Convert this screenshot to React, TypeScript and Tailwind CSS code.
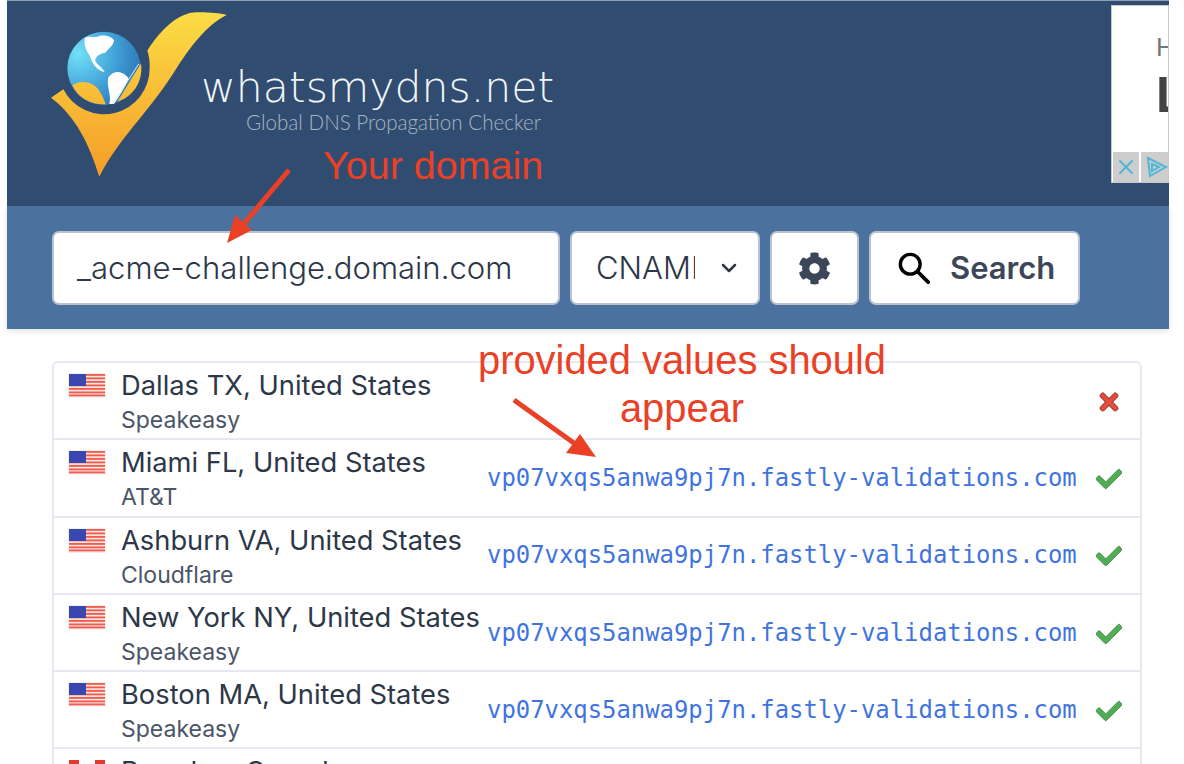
import { ChevronDown, X } from "lucide-react";
import { FaCheck, FaCog, FaTimes } from "react-icons/fa";

const UI_FONT = "font-['Inter','Noto_Sans',sans-serif]";

interface Row {
  city: string;
  isp: string;
  value: string;
  ok: boolean;
  flag: "us" | "ca";
}

const VALUE = "vp07vxqs5anwa9pj7n.fastly-validations.com";

const rows: Row[] = [
  { city: "Dallas TX, United States", isp: "Speakeasy", value: "", ok: false, flag: "us" },
  { city: "Miami FL, United States", isp: "AT&T", value: VALUE, ok: true, flag: "us" },
  { city: "Ashburn VA, United States", isp: "Cloudflare", value: VALUE, ok: true, flag: "us" },
  { city: "New York NY, United States", isp: "Speakeasy", value: VALUE, ok: true, flag: "us" },
  { city: "Boston MA, United States", isp: "Speakeasy", value: VALUE, ok: true, flag: "us" },
  { city: "Brandon, Canada", isp: "Speakeasy", value: VALUE, ok: true, flag: "ca" },
];

const UsFlag = () => (
  <svg width="38" height="25" viewBox="0 0 38 25" className="shrink-0">
    <rect width="38" height="25" fill="#f1f1f4" />
    <rect x="1" y="1" width="36" height="23" fill="#fbe3e0" />
    {[1, 4.5, 8, 11.5, 15, 18.5, 21.5].map((y) => (
      <rect key={y} x="1" y={y} width="36" height="1.8" fill="#ef5a4c" />
    ))}
    <rect x="1" y="1" width="17" height="12" fill="#3a47b0" />
  </svg>
);

const CaFlag = () => (
  <svg width="38" height="25" viewBox="0 0 38 25" className="shrink-0">
    <rect width="38" height="25" fill="#ffffff" />
    <rect x="1" y="1" width="10" height="23" fill="#e8382b" />
    <rect x="27" y="1" width="10" height="23" fill="#e8382b" />
  </svg>
);

const Logo = () => (
  <svg width="200" height="185" viewBox="0 3 600 555" className="shrink-0">
    <defs>
      <linearGradient id="gold" gradientUnits="userSpaceOnUse" x1="0" y1="40" x2="0" y2="530">
        <stop offset="0" stopColor="#fbdc45" />
        <stop offset="1" stopColor="#f59c28" />
      </linearGradient>
      <radialGradient id="sea" cx="0.15" cy="0.3" r="0.95">
        <stop offset="0" stopColor="#72e0f8" />
        <stop offset="0.6" stopColor="#3d9bd3" />
        <stop offset="1" stopColor="#2b6fae" />
      </radialGradient>
    </defs>
    <path
      d="M33 293 L70 268 A137 137 0 0 0 329 205 C330 185 327 168 322 152 C360 90 420 30 480 37 C510 37 540 40 560 45 C500 75 450 140 400 220 C320 345 240 410 178 530 C150 440 110 350 33 293 Z"
      fill="url(#gold)"
    />
    <circle cx="192" cy="205" r="110" fill="url(#sea)" />
    {/* north america */}
    <path
      d="M135 113 C150 106 165 116 178 108 C195 104 212 108 222 120 C222 136 205 146 196 158 C180 160 164 170 166 182 C172 196 184 198 194 216 C174 214 156 192 150 168 C138 152 130 132 135 113 Z"
      fill="#ffffff"
    />
    {/* south america */}
    <path
      d="M205 232 C222 208 250 212 266 235 C256 262 240 285 222 312 L208 312 C216 285 198 262 205 232 Z"
      fill="#ffffff"
    />
    <path
      d="M97 255 C125 238 160 245 178 272 C188 288 193 300 197 313 C150 315 112 292 97 255 Z"
      fill="url(#gold)"
    />
    <path d="M232 305 L303 190 C310 245 280 290 232 305 Z" fill="url(#gold)" />
    <path d="M218 312 L296 192" stroke="#e8eef4" strokeWidth="3" fill="none" />
  </svg>
);

// red call-out arrows drawn over the page
const Arrow = ({ className, d, head, w, h }: { className: string; d: string; head: string; w: number; h: number }) => (
  <svg width={w} height={h} viewBox={`0 0 ${w} ${h}`} className={className}>
    <path d={d} stroke="#ea4025" strokeWidth="5" fill="none" />
    <path d={head} fill="#ea4025" />
  </svg>
);

export default function App() {
  return (
    <div className={`relative h-[764px] w-[1184px] overflow-hidden bg-white ${UI_FONT}`}>
      <div className="ml-[7px] mr-[15px] border-t border-[#8fa0b4]">
        <header className="flex h-[205px] items-start justify-between bg-[#304d71]">
          <div className="flex pl-[33px]">
            <Logo />
            <div className="ml-[-39px] pt-[63px]">
              <div className="font-['DejaVu_Sans',sans-serif] text-[42.6px] font-extralight leading-[46px] text-[#f2f5f8]">
                whatsmydns.net
              </div>
              <div className="ml-[45px] whitespace-nowrap font-['Lato',sans-serif] text-[20.6px] font-light leading-[24px] text-[#a8b4c3]">
                Global DNS Propagation Checker
              </div>
            </div>
          </div>
          <div className="mt-[4px] flex h-[178px] w-[58px] flex-col overflow-hidden border border-[#c3c8ce] bg-white">
            <div className="flex-1 overflow-hidden pl-[44px] pt-[26px] font-['Liberation_Sans',sans-serif] text-[#777]">
              <div className="text-[26px] leading-[30px]">H</div>
              <div className="mt-[8px] text-[50px] font-bold leading-[50px] text-[#444]">L</div>
            </div>
            <div className="flex h-[30px] gap-[2px] pl-[1px]">
              <div className="flex w-[30px] items-center justify-center bg-[#cdcdcd]">
                <X size={24} strokeWidth={2} className="text-[#4fb6d8]" />
              </div>
              <div className="w-[30px] bg-[#cdcdcd] pl-[5px] pt-[4px]">
                <svg width="22" height="22" viewBox="0 0 22 22">
                  <path d="M2 2 L20 11 L4 20 Z M6 8 L13 11 L6 15 Z" fill="none" stroke="#4fb6d8" strokeWidth="2" />
                </svg>
              </div>
            </div>
          </div>
        </header>

        <div className="flex h-[123px] gap-[10px] bg-[#4b719f] pl-[45px] pt-[25px] shadow-[0_2px_6px_rgba(0,0,0,0.12)]">
          <div className="flex h-[74px] w-[508px] items-center rounded-[7px] border-2 border-[#b9c3d0] bg-white pl-[23px] text-[31.1px] font-light text-[#2d3748]">
            _acme-challenge.domain.com
          </div>
          <div className="flex h-[74px] w-[190px] items-center rounded-[7px] border-2 border-[#b9c3d0] bg-white pl-[24px] text-[31px] font-light text-[#2d3748]">
            <span className="w-[99px] overflow-hidden whitespace-nowrap">CNAME</span>
            <ChevronDown size={24} strokeWidth={2.5} className="ml-[22px] text-[#2d3748]" />
          </div>
          <div className="flex h-[74px] w-[89px] items-center justify-center rounded-[7px] border-2 border-[#b9c3d0] bg-white">
            <FaCog size={33} className="text-[#3c4659]" />
          </div>
          <div className="flex h-[74px] w-[211px] items-center rounded-[7px] border-2 border-[#b9c3d0] bg-white pl-[27px] text-[31px] font-semibold text-[#3c4659]">
            <svg width="32" height="32" viewBox="0 0 34 34" className="shrink-0">
              <circle cx="13" cy="13" r="10.5" fill="none" stroke="#000" strokeWidth="3.6" />
              <path d="M21 21 L32 32" stroke="#000" strokeWidth="4" strokeLinecap="round" />
            </svg>
            <span className="ml-[20px]">Search</span>
          </div>
        </div>

        <div className="ml-[45px] mr-[27px] mt-[32px] overflow-hidden rounded-t-[6px] border-2 border-[#e6e8ef]">
          {rows.map((row) => (
            <div key={row.city} className="flex h-[77.3px] border-b-2 border-[#e6e8ef] pl-[14px] pt-[8px]">
              <div className="pt-[2px]">{row.flag === "us" ? <UsFlag /> : <CaFlag />}</div>
              <div className="ml-[15px] w-[366px] shrink-0">
                <div className="whitespace-nowrap text-[27.3px] leading-[30px] text-[#2d3748]">{row.city}</div>
                <div className="mt-[4px] text-[23px] leading-[30px] text-[#4a5568]">{row.isp}</div>
              </div>
              <div className="flex flex-1 items-center pb-[6px] pr-[18px]">
                <span className="flex-1 whitespace-nowrap font-['DejaVu_Sans_Mono',monospace] text-[23.9px] text-[#3f74e0]">
                  {row.value}
                </span>
                {row.ok ? (
                  <FaCheck size={26} className="text-[#4caf50] [stroke:#3f6b47] [stroke-width:14px]" />
                ) : (
                  <FaTimes size={26} className="text-[#e74c3c] [stroke:#a8403a] [stroke-width:22px]" />
                )}
              </div>
            </div>
          ))}
        </div>
      </div>

      {/* annotations */}
      <div className="absolute left-[323px] top-[141px] font-['Liberation_Sans',sans-serif] text-[39.5px] leading-[48px] text-[#ea4025]">
        Your domain
      </div>
      <Arrow
        className="absolute left-[226px] top-[168px]"
        w={66}
        h={76}
        d="M63 2 L16 58"
        head="M1 75 L9 47 L26 62 Z"
      />
      <div className="absolute left-[472px] top-[336px] w-[420px] text-center font-['Liberation_Sans',sans-serif] text-[39.9px] leading-[48px] text-[#ea4025]">
        provided values should appear
      </div>
      <Arrow
        className="absolute left-[512px] top-[398px]"
        w={86}
        h={60}
        d="M2 2 L66 48"
        head="M84 59 L54 55 L68 36 Z"
      />
    </div>
  );
}
